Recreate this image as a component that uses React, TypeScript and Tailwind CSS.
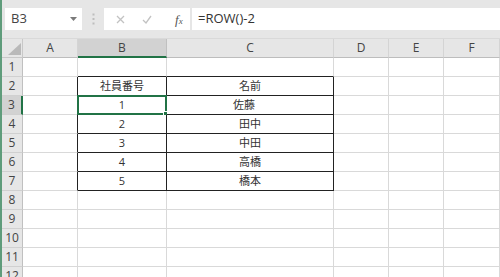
import React from "react";

// Column widths include each column's 1px right border.
const COLS = [
  { key: "", w: "w-[21px]" },
  { key: "A", w: "w-[55px]" },
  { key: "B", w: "w-[89px]" },
  { key: "C", w: "w-[167px]" },
  { key: "D", w: "w-[55px]" },
  { key: "E", w: "w-[55px]" },
  { key: "F", w: "w-[56px]" },
];

const ROWS: { B?: string; C?: string; shift?: boolean }[] = [
  {},
  { B: "社員番号", C: "名前" },
  { B: "1", C: "佐藤", shift: true },
  { B: "2", C: "田中" },
  { B: "3", C: "中田" },
  { B: "4", C: "高橋" },
  { B: "5", C: "橋本" },
  {},
  {},
  {},
  {},
  {},
];

const FONT = "font-['Open_Sans','Noto_Sans_CJK_JP',sans-serif]";

function Toolbar() {
  return (
    <div className="h-[39px] bg-[#e6e6e6] border-b border-[#d9d9d9] flex items-start pt-[8px] pl-[3px] shrink-0">
      <div className="w-[77px] h-[22px] bg-white flex items-center justify-between pl-[6px] pr-[5px]">
        <span className="text-[13px] text-[#444]">B3</span>
        <svg width="7" height="4" viewBox="0 0 7 4" aria-hidden="true">
          <path d="M0 0h7L3.5 4z" fill="#7a7a7a" />
        </svg>
      </div>
      <div className="w-[22px] h-[22px] flex items-center justify-center">
        <svg width="3" height="12" viewBox="0 0 3 12" aria-hidden="true">
          <rect x="0.5" y="0.5" width="2" height="2" fill="#bdbdbd" />
          <rect x="0.5" y="5" width="2" height="2" fill="#bdbdbd" />
          <rect x="0.5" y="9.5" width="2" height="2" fill="#bdbdbd" />
        </svg>
      </div>
      <div className="w-[86px] h-[22px] bg-white flex items-center pl-[12px] gap-[17px]">
        <svg width="9" height="9" viewBox="0 0 9 9" aria-hidden="true">
          <path d="M1 1l7 7M8 1L1 8" stroke="#c2c2c2" strokeWidth="1.3" />
        </svg>
        <svg width="10" height="9" viewBox="0 0 10 9" aria-hidden="true">
          <path d="M1 5l3 3 5-7" stroke="#c2c2c2" strokeWidth="1.3" fill="none" />
        </svg>
        <span className="ml-[6px] font-['Liberation_Serif',serif] italic text-[13px] text-[#555] leading-none">
          f<span className="text-[9px]">x</span>
        </span>
      </div>
      <div className="ml-[2px] flex-1 h-[22px] bg-white flex items-center pl-[6px]">
        <span className="text-[13px] text-[#333]">=ROW()-2</span>
      </div>
    </div>
  );
}

function HeaderRow() {
  return (
    <div className="flex h-[19px] shrink-0">
      {COLS.map((c, i) => {
        if (i === 0) {
          return (
            <div key="corner" className={`${c.w} h-full bg-[#e6e6e6] border-r border-b border-[#c8c8c8] relative`}>
              <svg className="absolute right-[1px] bottom-[2px]" width="13" height="12" viewBox="0 0 13 12" aria-hidden="true">
                <path d="M13 0V12H0z" fill="#b9b9b9" />
              </svg>
            </div>
          );
        }
        const sel = c.key === "B";
        return (
          <div
            key={c.key}
            className={`${c.w} h-full flex items-center justify-center text-[12px] text-[#444] border-r ${
              sel ? "bg-[#d2d2d2] border-b-2 border-b-[#217346] border-r-[#c0c0c0]" : "bg-[#e6e6e6] border-b border-b-[#bdbdbd] border-r-[#d4d4d4]"
            }`}
          >
            {c.key}
          </div>
        );
      })}
    </div>
  );
}

function DataRow({ n, row }: { n: number; row: (typeof ROWS)[number] }) {
  const inTable = n >= 2 && n <= 7;
  return (
    <div className="flex h-[19px] shrink-0">
      <div
        className={`${COLS[0].w} h-full flex items-center justify-center text-[12px] text-[#444] border-b border-b-[#d0d0d0] ${
          n === 3 ? "bg-[#d2d2d2] border-r-2 border-r-[#217346]" : "bg-[#e6e6e6] border-r border-r-[#c0c0c0]"
        }`}
      >
        {n}
      </div>
      {COLS.slice(1).map((c) => {
        const rightBlack = inTable && (c.key === "A" || c.key === "B" || c.key === "C");
        const bottomBlack = n >= 1 && n <= 7 && (c.key === "B" || c.key === "C");
        const text = c.key === "B" ? row.B : c.key === "C" ? row.C : undefined;
        const selected = n === 3 && c.key === "B";
        return (
          <div
            key={c.key}
            className={`${c.w} h-full relative flex items-center justify-center text-[11px] text-[#333] bg-white border-r border-b ${
              rightBlack ? "border-r-[#222]" : "border-r-[#d9d9d9]"
            } ${bottomBlack ? "border-b-[#222]" : "border-b-[#d9d9d9]"} ${
              c.key === "C" && row.shift ? "pr-[12px]" : ""
            }`}
          >
            {text}
            {selected && (
              <div className="absolute -left-[1px] -top-[1px] -right-[1px] -bottom-[1px] border-2 border-[#217346]">
                <div className="absolute -right-[4px] -bottom-[4px] w-[6px] h-[6px] bg-[#217346] border border-white" />
              </div>
            )}
          </div>
        );
      })}
    </div>
  );
}

export default function App() {
  return (
    <div className={`w-[500px] h-[277px] overflow-hidden bg-white border-l-2 border-[#5f9c7b] flex flex-col ${FONT}`}>
      <Toolbar />
      <HeaderRow />
      {ROWS.map((row, i) => (
        <DataRow key={i} n={i + 1} row={row} />
      ))}
    </div>
  );
}
